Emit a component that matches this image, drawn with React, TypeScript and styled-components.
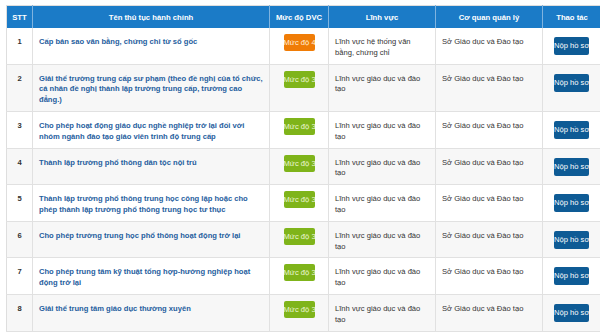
import React from "react";
import styled, { createGlobalStyle } from "styled-components";

const GlobalStyle = createGlobalStyle`
  html, body {
    margin: 0;
    padding: 0;
    background: #ffffff;
    overflow: hidden;
  }
  body {
    font-family: "Liberation Sans", Arial, sans-serif;
  }
`;

const Page = styled.div`
  padding: 5px 0 0 6px;
  width: 600px;
  height: 332px;
  box-sizing: border-box;
  overflow: hidden;
`;

const Table = styled.table`
  width: 595px;
  table-layout: fixed;
  border-collapse: collapse;
  border: 1px solid #dedede;
  font-family: "Liberation Sans", Arial, sans-serif;
`;

const HeadCell = styled.th`
  height: 22px;
  padding: 0;
  background: #1b7bc7;
  color: #ffffff;
  font-size: 7.7px;
  font-weight: bold;
  text-align: center;
  vertical-align: middle;
  border-left: 1px solid #7fb3df;
  &:first-child {
    border-left: none;
  }
`;

const Row = styled.tr<{ $striped: boolean }>`
  background: ${(p) => (p.$striped ? "#f7f7f7" : "#ffffff")};
  border-bottom: 1px solid #e1e1e1;
`;

const Cell = styled.td<{ $align?: "left" | "center"; $tone?: "index" | "title" | "plain" }>`
  padding: 9px 6px 5px 6px;
  vertical-align: top;
  text-align: ${(p) => p.$align ?? "left"};
  font-size: 7.6px;
  line-height: 10.8px;
  border-left: 1px solid #e1e1e1;
  color: ${(p) => (p.$tone === "title" ? "#1f5e9e" : "#333333")};
  font-weight: ${(p) => (p.$tone === "plain" ? "normal" : "bold")};
  &:first-child {
    border-left: none;
  }
`;

const ControlCell = styled.td`
  padding: 6px 0 0 0;
  vertical-align: top;
  text-align: center;
  border-left: 1px solid #e1e1e1;
`;

const Badge = styled.span<{ $level: number }>`
  display: inline-block;
  width: 31px;
  height: 17px;
  line-height: 17px;
  border-radius: 2px;
  overflow: hidden;
  white-space: nowrap;
  text-align: left;
  font-size: 7.6px;
  color: ${(p) => (p.$level === 4 ? "#fff1dc" : "#eef7d8")};
  background: ${(p) => (p.$level === 4 ? "#f07c06" : "#7fb41a")};
  font-family: "Liberation Sans", Arial, sans-serif;
`;

const SubmitButton = styled.button`
  display: inline-block;
  width: 35px;
  height: 18px;
  padding: 0;
  margin: 0 0 0 -1px;
  border: none;
  border-radius: 2px;
  background: #0e5b95;
  color: #ffffff;
  font-size: 7.6px;
  line-height: 18px;
  text-align: left;
  white-space: nowrap;
  overflow: hidden;
  font-family: "Liberation Sans", Arial, sans-serif;
  cursor: pointer;
`;

type Item = {
  id: number;
  title: string;
  level: number;
  field: string;
  agency: string;
};

const items: Item[] = [
  { id: 1, title: "Cấp bản sao văn bằng, chứng chỉ từ sổ gốc", level: 4, field: "Lĩnh vực hệ thống văn bằng, chứng chỉ", agency: "Sở Giáo dục và Đào tạo" },
  { id: 2, title: "Giải thể trường trung cấp sư phạm (theo đề nghị của tổ chức, cá nhân đề nghị thành lập trường trung cấp, trường cao đẳng.)", level: 3, field: "Lĩnh vực giáo dục và đào tạo", agency: "Sở Giáo dục và Đào tạo" },
  { id: 3, title: "Cho phép hoạt động giáo dục nghề nghiệp trở lại đối với nhóm ngành đào tạo giáo viên trình độ trung cấp", level: 3, field: "Lĩnh vực giáo dục và đào tạo", agency: "Sở Giáo dục và Đào tạo" },
  { id: 4, title: "Thành lập trường phổ thông dân tộc nội trú", level: 3, field: "Lĩnh vực giáo dục và đào tạo", agency: "Sở Giáo dục và Đào tạo" },
  { id: 5, title: "Thành lập trường phổ thông trung học công lập hoặc cho phép thành lập trường phổ thông trung học tư thục", level: 3, field: "Lĩnh vực giáo dục và đào tạo", agency: "Sở Giáo dục và Đào tạo" },
  { id: 6, title: "Cho phép trường trung học phổ thông hoạt động trở lại", level: 3, field: "Lĩnh vực giáo dục và đào tạo", agency: "Sở Giáo dục và Đào tạo" },
  { id: 7, title: "Cho phép trung tâm kỹ thuật tổng hợp-hướng nghiệp hoạt động trở lại", level: 3, field: "Lĩnh vực giáo dục và đào tạo", agency: "Sở Giáo dục và Đào tạo" },
  { id: 8, title: "Giải thể trung tâm giáo dục thường xuyên", level: 3, field: "Lĩnh vực giáo dục và đào tạo", agency: "Sở Giáo dục và Đào tạo" },
];

export default function App() {
  return (
    <>
      <GlobalStyle />
      <Page>
        <Table>
          <colgroup>
            <col style={{ width: 26 }} />
            <col style={{ width: 237 }} />
            <col style={{ width: 59 }} />
            <col style={{ width: 107 }} />
            <col style={{ width: 107 }} />
            <col style={{ width: 59 }} />
          </colgroup>
          <thead>
            <tr>
              <HeadCell>STT</HeadCell>
              <HeadCell>Tên thủ tục hành chính</HeadCell>
              <HeadCell>Mức độ DVC</HeadCell>
              <HeadCell>Lĩnh vực</HeadCell>
              <HeadCell>Cơ quan quản lý</HeadCell>
              <HeadCell>Thao tác</HeadCell>
            </tr>
          </thead>
          <tbody>
            {items.map((it, i) => (
              <Row key={it.id} $striped={i % 2 === 1}>
                <Cell $align="center" $tone="index">{it.id}</Cell>
                <Cell $tone="title">{it.title}</Cell>
                <ControlCell>
                  <Badge $level={it.level}>Mức độ {it.level}</Badge>
                </ControlCell>
                <Cell $tone="plain">{it.field}</Cell>
                <Cell $tone="plain">{it.agency}</Cell>
                <ControlCell>
                  <SubmitButton>Nộp hồ sơ</SubmitButton>
                </ControlCell>
              </Row>
            ))}
          </tbody>
        </Table>
      </Page>
    </>
  );
}
